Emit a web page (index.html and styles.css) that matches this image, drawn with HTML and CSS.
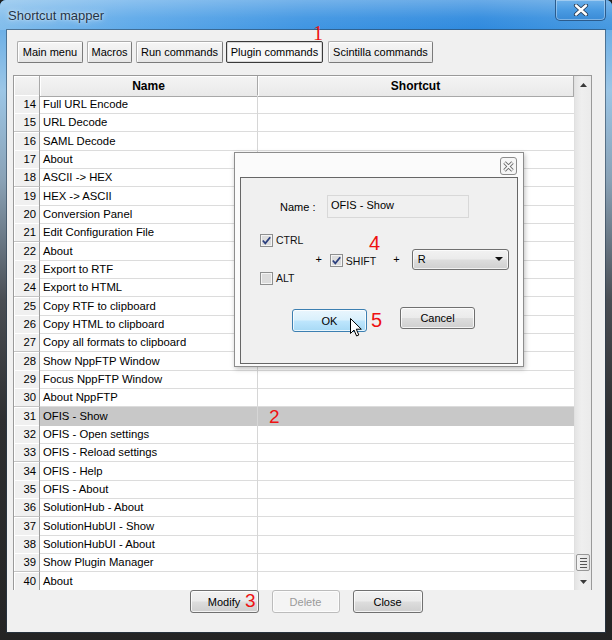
FILE: index.html
```html
<!DOCTYPE html>
<html>
<head>
<meta charset="utf-8">
<link rel="stylesheet" href="styles.css">
</head>
<body>
<div class="window">
  <div class="titlebar">
    <span class="title">Shortcut mapper</span>
    <div class="wclose">
      <svg width="16" height="12" viewBox="0 0 16 12"><path d="M3 1.5 L13 10.5 M13 1.5 L3 10.5" stroke="#2a3d55" stroke-width="4.2" stroke-linecap="round"/><path d="M3 1.5 L13 10.5 M13 1.5 L3 10.5" stroke="#fff" stroke-width="2.4" stroke-linecap="round"/></svg>
    </div>
  </div>
  <div class="client">
    <div class="tabs">
      <div class="tab w1">Main menu</div>
      <div class="tab w2">Macros</div>
      <div class="tab w3">Run commands</div>
      <div class="tab w4 active">Plugin commands</div>
      <div class="tab w5">Scintilla commands</div>
    </div>
    <div class="grid">
      <div class="table">
        <div class="row head"><div class="num"></div><div class="name">Name</div><div class="sc">Shortcut</div></div>
        <div class="row"><div class="num">14</div><div class="name">Full URL Encode</div><div class="sc"></div></div>
        <div class="row"><div class="num">15</div><div class="name">URL Decode</div><div class="sc"></div></div>
        <div class="row"><div class="num">16</div><div class="name">SAML Decode</div><div class="sc"></div></div>
        <div class="row"><div class="num">17</div><div class="name">About</div><div class="sc"></div></div>
        <div class="row"><div class="num">18</div><div class="name">ASCII -&gt; HEX</div><div class="sc"></div></div>
        <div class="row"><div class="num">19</div><div class="name">HEX -&gt; ASCII</div><div class="sc"></div></div>
        <div class="row"><div class="num">20</div><div class="name">Conversion Panel</div><div class="sc"></div></div>
        <div class="row"><div class="num">21</div><div class="name">Edit Configuration File</div><div class="sc"></div></div>
        <div class="row"><div class="num">22</div><div class="name">About</div><div class="sc"></div></div>
        <div class="row"><div class="num">23</div><div class="name">Export to RTF</div><div class="sc"></div></div>
        <div class="row"><div class="num">24</div><div class="name">Export to HTML</div><div class="sc"></div></div>
        <div class="row"><div class="num">25</div><div class="name">Copy RTF to clipboard</div><div class="sc"></div></div>
        <div class="row"><div class="num">26</div><div class="name">Copy HTML to clipboard</div><div class="sc"></div></div>
        <div class="row"><div class="num">27</div><div class="name">Copy all formats to clipboard</div><div class="sc"></div></div>
        <div class="row"><div class="num">28</div><div class="name">Show NppFTP Window</div><div class="sc"></div></div>
        <div class="row"><div class="num">29</div><div class="name">Focus NppFTP Window</div><div class="sc"></div></div>
        <div class="row"><div class="num">30</div><div class="name">About NppFTP</div><div class="sc"></div></div>
        <div class="row sel"><div class="num">31</div><div class="name">OFIS - Show</div><div class="sc"></div></div>
        <div class="row"><div class="num">32</div><div class="name">OFIS - Open settings</div><div class="sc"></div></div>
        <div class="row"><div class="num">33</div><div class="name">OFIS - Reload settings</div><div class="sc"></div></div>
        <div class="row"><div class="num">34</div><div class="name">OFIS - Help</div><div class="sc"></div></div>
        <div class="row"><div class="num">35</div><div class="name">OFIS - About</div><div class="sc"></div></div>
        <div class="row"><div class="num">36</div><div class="name">SolutionHub - About</div><div class="sc"></div></div>
        <div class="row"><div class="num">37</div><div class="name">SolutionHubUI - Show</div><div class="sc"></div></div>
        <div class="row"><div class="num">38</div><div class="name">SolutionHubUI - About</div><div class="sc"></div></div>
        <div class="row"><div class="num">39</div><div class="name">Show Plugin Manager</div><div class="sc"></div></div>
        <div class="row"><div class="num">40</div><div class="name">About</div><div class="sc"></div></div>
      </div>
      <div class="scrollbar">
        <div class="sarrow"><svg width="7" height="4" viewBox="0 0 7 4"><path d="M0 4 L3.5 0 L7 4 Z" fill="#3a3a3a"/></svg></div>
        <div class="track"><div class="thumb"><span></span><span></span><span></span><span></span></div></div>
        <div class="sarrow"><svg width="7" height="4" viewBox="0 0 7 4"><path d="M0 0 L3.5 4 L7 0 Z" fill="#3a3a3a"/></svg></div>
      </div>
    </div>
    <div class="actions">
      <div class="btn b-mod">Modify</div>
      <div class="btn b-del disabled">Delete</div>
      <div class="btn b-close">Close</div>
    </div>
  </div>

  <div class="dialog">
    <div class="dclose">
      <svg width="11" height="11" viewBox="0 0 11 11"><path d="M1.5 1.5 L9.5 9.5 M9.5 1.5 L1.5 9.5" stroke="#6e6e6e" stroke-width="3.4"/><path d="M1.5 1.5 L9.5 9.5 M9.5 1.5 L1.5 9.5" stroke="#fafafa" stroke-width="1.6"/></svg>
    </div>
    <div class="panel">
      <div class="namerow">
        <span class="nlabel">Name :</span>
        <div class="nfield">OFIS - Show</div>
      </div>
      <div class="keys">
        <div class="mods">
          <div class="chk"><svg width="13" height="13" viewBox="0 0 13 13"><rect x="0.5" y="0.5" width="12" height="12" fill="#f4f4f4" stroke="#8e8f8f"/><rect x="2" y="2" width="9" height="9" fill="#dcdcdc"/><path d="M2.8 6.5 L5.3 9.3 L10.2 3.2" stroke="#2b3f7e" stroke-width="1.8" fill="none"/></svg><span>CTRL</span></div>
          <div class="chk"><svg width="13" height="13" viewBox="0 0 13 13"><rect x="0.5" y="0.5" width="12" height="12" fill="#f4f4f4" stroke="#8e8f8f"/><rect x="2" y="2" width="9" height="9" fill="#dcdcdc"/></svg><span>ALT</span></div>
        </div>
        <span class="plus p1">+</span>
        <div class="chk shift"><svg width="13" height="13" viewBox="0 0 13 13"><rect x="0.5" y="0.5" width="12" height="12" fill="#f4f4f4" stroke="#8e8f8f"/><rect x="2" y="2" width="9" height="9" fill="#dcdcdc"/><path d="M2.8 6.5 L5.3 9.3 L10.2 3.2" stroke="#2b3f7e" stroke-width="1.8" fill="none"/></svg><span>SHIFT</span></div>
        <span class="plus p2">+</span>
        <div class="combo"><span>R</span><svg width="8" height="4" viewBox="0 0 8 4"><path d="M0 0 L8 0 L4 4 Z" fill="#111"/></svg></div>
      </div>
      <div class="dbtns">
        <div class="btn ok">OK</div>
        <div class="btn cancel">Cancel</div>
      </div>
    </div>
  </div>

  <span class="mark m1">1</span>
  <span class="mark m2">2</span>
  <span class="mark m3">3</span>
  <span class="mark m4">4</span>
  <span class="mark m5">5</span>
  <svg class="cursor" width="13" height="20" viewBox="0 0 13 20"><path d="M0.5 0.5 L0.5 15.5 L4 12 L6.6 18 L8.8 17 L6.3 11.2 L11.3 11.2 Z" fill="#fff" stroke="#000" stroke-width="1" stroke-linejoin="round"/></svg>
</div>
</body>
</html>
```

FILE: styles.css
```css
* { box-sizing: border-box; margin: 0; padding: 0; }
html, body { width: 612px; height: 640px; overflow: hidden; }
body { font-family: "Liberation Sans", Arial, sans-serif; background: #202020; color: #000; }

.window {
  position: relative;
  width: 612px;
  height: 640px;
  display: flex;
  flex-direction: column;
  border-radius: 6px 6px 0 0;
  overflow: hidden;
  background: linear-gradient(to bottom, #3e95de 0px, #6eb0e6 30px, #9cc6e6 90px, #8aa2b6 180px, #4a4e54 300px, #2e2f31 420px, #242424 100%);
}

.titlebar {
  height: 30px;
  flex: 0 0 30px;
  display: flex;
  justify-content: space-between;
  align-items: flex-start;
  background:
    linear-gradient(to bottom, rgba(255,255,255,0.28) 0%, rgba(255,255,255,0.05) 60%, rgba(255,255,255,0) 100%),
    linear-gradient(to right, #82bdeb 0%, #5ea9e9 22%, #3f95e2 50%, #2f8ade 78%, #4598e0 100%);
}
.title {
  font-size: 13px;
  color: #1f3347;
  margin: 8px 0 0 8px;
  text-shadow: 0 0 6px rgba(255,255,255,0.8), 0 0 2px rgba(255,255,255,0.6);
}
.wclose {
  width: 51px;
  height: 21px;
  margin-right: 6px;
  border: 1px solid #2b5b8c;
  border-top: none;
  border-radius: 0 0 5px 5px;
  background: linear-gradient(to bottom, #6eb1ea 0%, #4a9be2 50%, #3a8bd6 100%);
  box-shadow: inset 0 0 0 1px rgba(255,255,255,0.35);
  display: flex;
  align-items: center;
  justify-content: center;
}

.client {
  margin: 0 7px;
  height: 602px;
  background: #f0f0f0;
  box-shadow: 0 0 0 1px rgba(40,60,80,0.55);
  padding: 11px 0 0 6px;
  display: flex;
  flex-direction: column;
}

.tabs { display: flex; gap: 4px; margin-left: 4px; height: 22px; }
.tab {
  height: 22px;
  font-size: 11px;
  display: flex;
  align-items: center;
  justify-content: center;
  border: 1px solid #acacac;
  border-right-color: #7a7a7a;
  border-bottom-color: #7a7a7a;
  border-radius: 2px;
  background: linear-gradient(to bottom, #f6f6f6, #e6e6e6);
  box-shadow: inset 1px 1px 0 #fff;
}
.tab.w1 { width: 66px; }
.tab.w2 { width: 45px; }
.tab.w3 { width: 87px; }
.tab.w4 { width: 97px; margin-left: -1px; }
.tab.w5 { width: 105px; margin-left: 1px; }
.tab.active {
  border: 1px solid #3a3a3a;
  background: #f8f8f8;
  box-shadow: inset 0 0 0 1px #d8d8d8;
}

.grid {
  margin-top: 12px;
  width: 579px;
  height: 515px;
  border: 1px solid #9a9a9a;
  border-bottom: none;
  display: flex;
  overflow: hidden;
  background: #fff;
}
.table { width: 561px; display: flex; flex-direction: column; }
.row {
  display: grid;
  grid-template-columns: 26px 218px 316px;
  height: 18.33px;
  flex: 0 0 18.33px;
  font-size: 11.3px;
  line-height: 18px;
}
.row .num {
  background: #f0f0f0;
  border-right: 1px solid #9c9c9c;
  border-bottom: 1px solid #c4c4c4;
  box-shadow: inset 1px 1px 0 #fff;
  text-align: right;
  padding-right: 3px;
}
.row .name {
  border-right: 1px solid #d6d6d6;
  border-bottom: 1px solid #dcdcdc;
  padding-left: 3px;
  white-space: nowrap;
  overflow: hidden;
}
.row .sc { border-bottom: 1px solid #dcdcdc; }
.row.sel .name, .row.sel .sc { background: #c8c8c8; border-bottom-color: #c8c8c8; }
.row.head {
  height: 19px;
  flex: 0 0 19px;
  font-size: 12px;
  font-weight: bold;
  line-height: 20px;
}
.row.head .num, .row.head .name, .row.head .sc {
  background: linear-gradient(to bottom, #f4f4f4, #e9e9e9);
  border-right: 1px solid #a8a8a8;
  border-bottom: 1px solid #a8a8a8;
  box-shadow: inset 1px 1px 0 #fff;
  text-align: center;
  padding: 0;
}

.scrollbar {
  width: 17px;
  display: flex;
  flex-direction: column;
  background: linear-gradient(to right, #e4e4e4, #efefef 40%, #ebebeb);
  border-left: 1px solid #e0e0e0;
}
.sarrow { height: 17px; flex: 0 0 17px; display: flex; align-items: center; justify-content: center; }
.track { flex: 1; display: flex; flex-direction: column; justify-content: flex-end; padding-bottom: 2px; }
.thumb {
  height: 17px;
  margin: 0 1px;
  border: 1px solid #979797;
  border-radius: 2px;
  background: linear-gradient(to right, #f4f4f4, #e2e2e2);
  display: flex;
  flex-direction: column;
  justify-content: center;
  align-items: center;
  gap: 2px;
}
.thumb span { width: 7px; height: 1px; background: #555; }

.actions { display: flex; justify-content: center; gap: 13px; margin-right: 6px; }
.btn {
  height: 23px;
  font-size: 11px;
  display: flex;
  align-items: center;
  justify-content: center;
  border: 1px solid #707070;
  border-radius: 3px;
  background: linear-gradient(to bottom, #f2f2f2 0%, #ebebeb 48%, #dddddd 52%, #cfcfcf 100%);
  box-shadow: inset 0 0 0 1px rgba(255,255,255,0.75);
}
.b-mod { width: 69px; }
.b-del { width: 68px; }
.b-close { width: 70px; }
.btn.disabled {
  color: #9a9a9a;
  border-color: #bcbcbc;
  background: #f4f4f4;
}

.dialog {
  position: absolute;
  left: 234px;
  top: 152px;
  width: 290px;
  height: 215px;
  background: #fbfbfb;
  border: 1px solid #8d8d8d;
  box-shadow: 1px 2px 5px rgba(0,0,0,0.25);
  padding: 24px 5px 3px 5px;
}
.dclose {
  position: absolute;
  right: 6px;
  top: 4px;
  width: 17px;
  height: 18px;
  border: 1px solid #8c8c8c;
  border-radius: 3px;
  background: #f6f6f6;
  display: flex;
  align-items: center;
  justify-content: center;
}
.panel {
  height: 187px;
  border: 1px solid #666;
  background: #f0f0f0;
  font-size: 11px;
  display: flex;
  flex-direction: column;
}
.namerow { display: flex; align-items: center; margin-top: 17px; padding-left: 39px; }
.nlabel { width: 47px; }
.nfield {
  width: 142px;
  height: 23px;
  border: 1px solid #d8d8d8;
  background: #f0f0f0;
  padding: 3px 0 0 3px;
}
.keys { display: flex; align-items: center; margin-top: 15px; padding-left: 19px; height: 52px; }
.mods { display: flex; flex-direction: column; gap: 24px; }
.chk { display: flex; align-items: center; gap: 3px; height: 14px; font-size: 10.5px; color: #111; }
.chk svg { flex: 0 0 13px; }
.plus { font-size: 11px; }
.p1 { margin-left: 12px; }
.chk.shift { margin-left: 8px; margin-top: 3px; }
.p2 { margin-left: 17px; }
.combo {
  margin-left: 12px;
  width: 97px;
  height: 21px;
  border: 1px solid #707070;
  border-radius: 3px;
  background: linear-gradient(to bottom, #f2f2f2 0%, #ebebeb 48%, #dddddd 52%, #cfcfcf 100%);
  box-shadow: inset 0 0 0 1px rgba(255,255,255,0.7);
  display: flex;
  align-items: center;
  justify-content: space-between;
  padding: 0 5px 0 5px;
}
.dbtns { display: flex; align-items: flex-start; margin-top: 22px; padding-left: 51px; gap: 33px; }
.btn.ok {
  width: 75px;
  height: 23px;
  margin-top: 2px;
  border-color: #3c7fb1;
  background: linear-gradient(to bottom, #eaf6fd 0%, #d9f0fc 48%, #bee6fd 52%, #a7d9f5 100%);
}
.btn.cancel { width: 75px; height: 22px; }

.mark {
  position: absolute;
  color: #ee1111;
  font-family: "Liberation Sans", Arial, sans-serif;
  font-size: 19px;
  line-height: 1;
}
.m1 { font-family: "Liberation Serif", "Times New Roman", serif; font-size: 20px; left: 313px; top: 23px; }
.m2 { left: 269px; top: 407px; }
.m3 { left: 245px; top: 591px; }
.m4 { left: 369px; top: 233px; font-size: 20px; }
.m5 { left: 371px; top: 310px; font-size: 20px; }

.cursor { position: absolute; left: 350px; top: 318px; }
```
